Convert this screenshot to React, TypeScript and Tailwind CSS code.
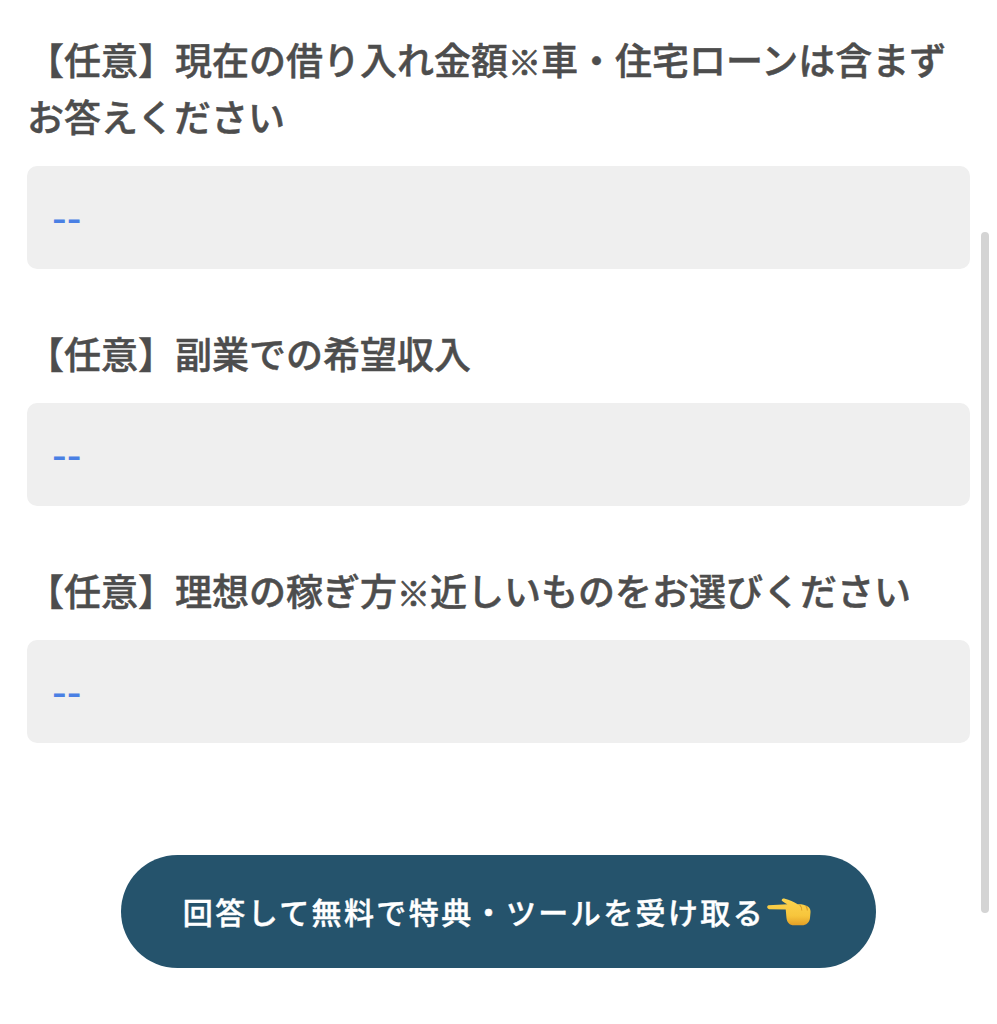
const FIELDS = [
  { id: 'debt', label: <>【任意】現在の借り入れ金額<span className="text-[33px] leading-none [-webkit-text-stroke:0.8px_#4d4d4d]">※</span>車・住宅ローンは含まずお答えください</> },
  { id: 'income', label: <>【任意】副業での希望収入</> },
  { id: 'style', label: <>【任意】理想の稼ぎ方<span className="text-[33px] leading-none [-webkit-text-stroke:0.8px_#4d4d4d]">※</span>近しいものをお選びください</> },
];

function PointingHand() {
  return (
    <svg width="44" height="28" viewBox="0 0 43 27" className="shrink-0">
      <defs>
        <linearGradient id="hand" x1="0" y1="0" x2="0" y2="1">
          <stop offset="0" stopColor="#fbd44f" />
          <stop offset="0.65" stopColor="#f7c53c" />
          <stop offset="1" stopColor="#e39f26" />
        </linearGradient>
      </defs>
      <path d="M1.500 6.800 L20 6 C18 4.800 15.500 3.600 14.500 2.500 C14 1 15.500 0 17.500 0.500 C22 1.500 26 3.500 30 6 C33 5.800 37 6.300 39.500 8 C41.800 9.500 42.800 11.500 42.500 14 L42 19.500 C41.500 23.500 38.500 26.500 34 26.500 L26.500 26.500 C22 26.500 19.500 23.500 19 19 L18.300 11 L2 10.800 C-0.300 10.500 -0.300 7.300 1.500 6.800 Z" fill="url(#hand)" />
      <path d="M32 6.500 C33.500 8 34 10 34 12 M38 7.500 C39 9 39.500 10.500 39.500 12" stroke="#d99a26" strokeWidth="1" fill="none" />
    </svg>
  );
}

export default function App() {
  return (
    <main className="relative h-[1024px] overflow-hidden bg-white font-['Noto_Sans_CJK_JP','Noto_Sans',sans-serif]">
      <form className="px-[27px] pt-[31px]">
        <div className="space-y-[56px]">
          {FIELDS.map((f) => (
            <div key={f.id}>
              <label htmlFor={f.id} className="mb-[21px] block text-[37px] font-medium leading-[57px] text-[#4d4d4d] [-webkit-text-stroke:0.5px_#4d4d4d]">
                {f.label}
              </label>
              <select
                id={f.id}
                className="block h-[103px] w-full appearance-none rounded-[10px] bg-[#efefef] pl-[25px] font-['Liberation_Sans',sans-serif] text-[44px] text-[#4a80e4] outline-none"
              >
                <option>--</option>
              </select>
            </div>
          ))}
        </div>

        <div className="mt-[112px] flex justify-center">
          <button
            type="button"
            className="flex h-[113px] w-[755px] items-center justify-center gap-[2px] rounded-full bg-[#25536c] pr-[3px] text-[30px] font-medium tracking-[2.4px] text-white [-webkit-text-stroke:0.4px_#ffffff]"
          >
            回答して無料で特典・ツールを受け取る
            <PointingHand />
          </button>
        </div>
      </form>

      {/* overlay scrollbar */}
      <div className="absolute left-[981px] top-[232px] h-[681px] w-[8px] rounded-[4px] bg-[#d4d4d4]" />
    </main>
  );
}
